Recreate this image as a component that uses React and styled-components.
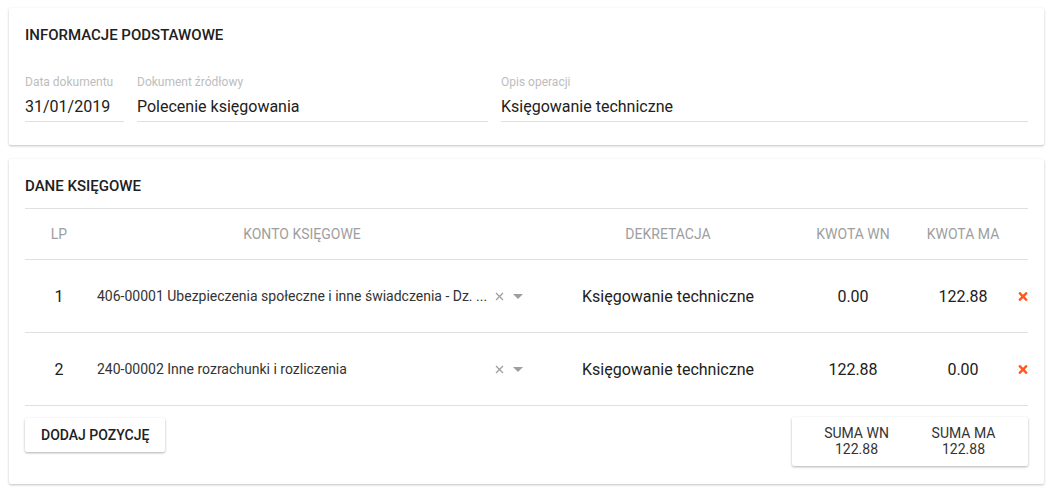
import React from "react";
import styled, { createGlobalStyle } from "styled-components";
import { FaTimes } from "react-icons/fa";

const GlobalStyle = createGlobalStyle`
  body {
    margin: 0;
    background: #fff;
    font-family: Roboto, "Liberation Sans", Arial, sans-serif;
    color: rgba(0, 0, 0, 0.87);
  }
`;

const Page = styled.div`
  padding: 8px 10px 8px 9px;
  display: flex;
  flex-direction: column;
  gap: 14px;
`;

const Card = styled.div`
  background: #fff;
  border-radius: 2px;
  box-shadow: 0 1px 3px rgba(0, 0, 0, 0.16), 0 1px 2px rgba(0, 0, 0, 0.1);
  padding: 16px 16px ${p => p.$pb || 16}px;
`;

const CardTitle = styled.div`
  font-size: 15px;
  font-weight: 500;
  line-height: 22px;
  color: #212121;
  text-transform: uppercase;
`;

const Fields = styled.div`
  display: grid;
  grid-template-columns: 99px 351px 1fr;
  gap: 13px;
  margin-top: 28px;
  margin-bottom: 7px;
`;

const Field = styled.div`
  display: flex;
  flex-direction: column;
`;

const Label = styled.div`
  font-size: 12px;
  line-height: 16px;
  color: #bdbdbd;
`;

const Value = styled.div`
  font-size: 16px;
  line-height: 24px;
  margin-top: 5px;
  padding-bottom: 2px;
  border-bottom: 1px solid #e0e0e0;
  color: #212121;
`;

const Table = styled.div`
  margin-top: 11px;
  border-top: 1px solid #e0e0e0;
`;

const Row = styled.div`
  display: grid;
  grid-template-columns: 68px 439px 272px 98px 116px 10px;
  align-items: center;
  height: ${p => (p.$head ? "50px" : "72px")};
  border-bottom: 1px solid #e0e0e0;
`;

const HeadCell = styled.div`
  font-size: 14px;
  color: #9e9e9e;
  text-align: center;
  text-transform: uppercase;
  white-space: nowrap;
  padding-right: ${p => p.$pr || 0}px;
  padding-left: ${p => p.$pl || 0}px;
`;

const Cell = styled.div`
  font-size: 16px;
  color: #212121;
  text-align: center;
  white-space: nowrap;
  padding-left: ${p => p.$pl || 0}px;
`;

const Select = styled.div`
  display: flex;
  align-items: center;
  padding: 0 8px 0 4px;
  min-width: 0;
`;

const SelectText = styled.div`
  flex: 1;
  font-size: 14px;
  color: #333;
  white-space: nowrap;
  overflow: hidden;
`;

const IconSlot = styled.span`
  display: flex;
  width: ${p => p.$w || 12}px;
  justify-content: center;
  margin-left: ${p => p.$ml || 0}px;
`;

const DeleteBtn = styled.div`
  display: flex;
  justify-content: flex-start;
  color: #ff5722;
  font-size: 13px;
  cursor: pointer;
`;

const Footer = styled.div`
  display: flex;
  justify-content: space-between;
  align-items: flex-start;
  margin-top: 11px;
`;

const Button = styled.button`
  margin-top: 1px;
  height: 34px;
  padding: 0 16px;
  border: none;
  background: #fff;
  border-radius: 2px;
  box-shadow: 0 1px 3px rgba(0, 0, 0, 0.2), 0 1px 2px rgba(0, 0, 0, 0.12);
  font-family: Roboto, "Liberation Sans", Arial, sans-serif;
  font-size: 14px;
  font-weight: 500;
  color: #212121;
  text-transform: uppercase;
`;

const Summary = styled.div`
  display: grid;
  grid-template-columns: 107px 107px;
  padding: 8px 11px 9px;
  background: #fff;
  border-radius: 2px;
  box-shadow: 0 1px 3px rgba(0, 0, 0, 0.2), 0 1px 2px rgba(0, 0, 0, 0.12);
`;

const SumCol = styled.div`
  text-align: center;
  font-size: 14px;
  line-height: 16px;
  color: #333;
`;

const ClearIcon = () => (
  <svg width="9" height="9" viewBox="0 0 9 9">
    <path d="M1 1L8 8M8 1L1 8" stroke="#9e9e9e" strokeWidth="1.3" />
  </svg>
);

const ArrowIcon = () => (
  <svg width="10" height="5" viewBox="0 0 10 5">
    <path d="M0 0H10L5 5Z" fill="#9e9e9e" />
  </svg>
);

const rows = [
  {
    lp: 1,
    konto: "406-00001 Ubezpieczenia społeczne i inne świadczenia - Dz. ...",
    dek: "Księgowanie techniczne",
    wn: "0.00",
    ma: "122.88",
  },
  {
    lp: 2,
    konto: "240-00002 Inne rozrachunki i rozliczenia",
    dek: "Księgowanie techniczne",
    wn: "122.88",
    ma: "0.00",
  },
];

const App = () => {
  return (
    <Page>
      <GlobalStyle />
      <Card>
        <CardTitle>Informacje podstawowe</CardTitle>
        <Fields>
          <Field>
            <Label>Data dokumentu</Label>
            <Value>31/01/2019</Value>
          </Field>
          <Field>
            <Label>Dokument źródłowy</Label>
            <Value>Polecenie księgowania</Value>
          </Field>
          <Field>
            <Label>Opis operacji</Label>
            <Value>Księgowanie techniczne</Value>
          </Field>
        </Fields>
      </Card>
      <Card $pb={18}>
        <CardTitle>Dane księgowe</CardTitle>
        <Table>
          <Row $head>
            <HeadCell>LP</HeadCell>
            <HeadCell $pr={21}>Konto księgowe</HeadCell>
            <HeadCell>Dekretacja</HeadCell>
            <HeadCell>Kwota WN</HeadCell>
            <HeadCell $pl={6}>Kwota MA</HeadCell>
            <div />
          </Row>
          {rows.map(r => (
            <Row key={r.lp}>
              <Cell>{r.lp}</Cell>
              <Select>
                <SelectText>{r.konto}</SelectText>
                <IconSlot $w={12}>
                  <ClearIcon />
                </IconSlot>
                <IconSlot $w={12} $ml={7}>
                  <ArrowIcon />
                </IconSlot>
              </Select>
              <Cell>{r.dek}</Cell>
              <Cell>{r.wn}</Cell>
              <Cell $pl={6}>{r.ma}</Cell>
              <DeleteBtn>
                <FaTimes />
              </DeleteBtn>
            </Row>
          ))}
        </Table>
        <Footer>
          <Button>Dodaj pozycję</Button>
          <Summary>
            <SumCol>
              <div>SUMA WN</div>
              <div>122.88</div>
            </SumCol>
            <SumCol>
              <div>SUMA MA</div>
              <div>122.88</div>
            </SumCol>
          </Summary>
        </Footer>
      </Card>
    </Page>
  );
};

export default App;
